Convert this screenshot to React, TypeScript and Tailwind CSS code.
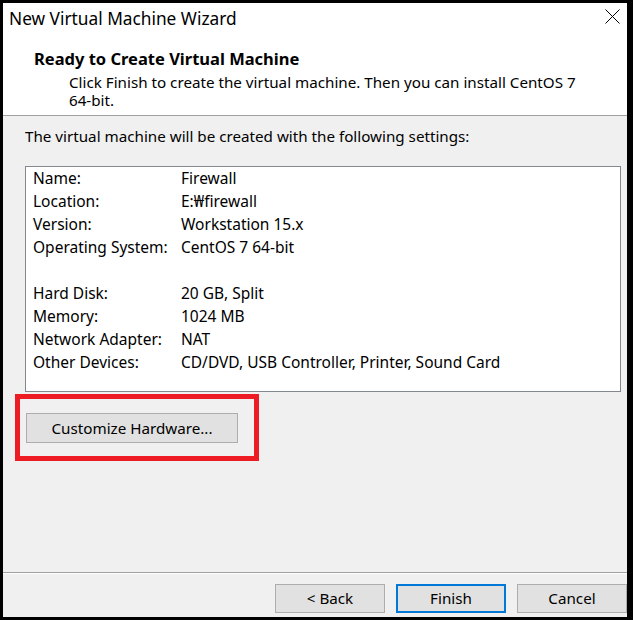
import React from 'react';

const rows: [string, string][] = [
  ['Name:', 'Firewall'],
  ['Location:', 'E:\u20A9firewall'],
  ['Version:', 'Workstation 15.x'],
  ['Operating System:', 'CentOS 7 64-bit'],
];

const rows2: [string, string][] = [
  ['Hard Disk:', '20 GB, Split'],
  ['Memory:', '1024 MB'],
  ['Network Adapter:', 'NAT'],
  ['Other Devices:', 'CD/DVD, USB Controller, Printer, Sound Card'],
];

const Row: React.FC<{ label: string; value: string }> = ({ label, value }) => (
  <div className="flex h-[23px] items-center">
    <span className="w-[148px] shrink-0">{label}</span>
    <span>{value}</span>
  </div>
);

const WinButton: React.FC<{ children: React.ReactNode; primary?: boolean }> = ({ children, primary }) => (
  <button
    className={
      'flex h-[29px] w-[110px] shrink-0 items-center justify-center bg-[#e1e1e1] text-[15.2px] text-black ' +
      (primary ? 'border-2 border-[#0078d7]' : 'border border-[#adadad]')
    }
  >
    {children}
  </button>
);

export default function App() {
  return (
    <div
      className="h-[620px] w-[633px] overflow-hidden bg-black pl-[3px] pt-[3px]"
      style={{ fontFamily: '"Noto Sans", "Liberation Sans", sans-serif' }}
    >
      <div className="flex h-[614px] w-[624px] flex-col overflow-hidden bg-[#f0f0f0] text-black">
        {/* Title bar + header */}
        <div className="h-[113px] shrink-0 border-b border-[#a0a0a0] bg-white">
          <div className="flex h-[31px] items-start justify-between pl-[6px] pr-[7px]">
            <span className="pt-[6px] text-[17.3px] leading-[20px]">New Virtual Machine Wizard</span>
            <svg width="15" height="15" viewBox="0 0 15 15" className="mt-[6px]">
              <path d="M0.5 0.5 L14.5 14.5 M14.5 0.5 L0.5 14.5" stroke="#000" strokeWidth="1" />
            </svg>
          </div>
          <div className="pl-[31px] pt-[14px]">
            <div className="text-[16.5px] font-bold leading-[22px]">Ready to Create Virtual Machine</div>
            <div className="mt-[3px] w-[560px] pl-[35px] text-[15.2px] leading-[18px]">
              Click Finish to create the virtual machine. Then you can install CentOS 7 64-bit.
            </div>
          </div>
        </div>

        {/* Body */}
        <div className="flex flex-1 flex-col px-[22px] pt-[10px] text-[15.2px]">
          <div className="leading-[20px]">The virtual machine will be created with the following settings:</div>
          <div className="mt-[20px] h-[226px] w-[596px] border border-[#828790] bg-white pl-[7px] text-[15.5px]">
            {rows.map(([l, v]) => (
              <Row key={l} label={l} value={v} />
            ))}
            <div className="h-[23px]" />
            {rows2.map(([l, v]) => (
              <Row key={l} label={l} value={v} />
            ))}
          </div>
          <div className="-ml-[10px] mt-[2px] h-[67px] w-[244px] border-[5px] border-[#ed1c24] pl-[6px] pt-[14px]">
            <button className="flex h-[30px] w-[212px] items-center justify-center border border-[#adadad] bg-[#e1e1e1]">
              Customize Hardware...
            </button>
          </div>
        </div>

        {/* Footer */}
        <div className="h-[45px] shrink-0 border-t border-[#a0a0a0]">
          <div className="flex gap-[11px] border-t border-white pl-[272px] pt-[10px]">
            <WinButton>&lt; Back</WinButton>
            <WinButton primary>Finish</WinButton>
            <WinButton>Cancel</WinButton>
          </div>
        </div>
      </div>
    </div>
  );
}
